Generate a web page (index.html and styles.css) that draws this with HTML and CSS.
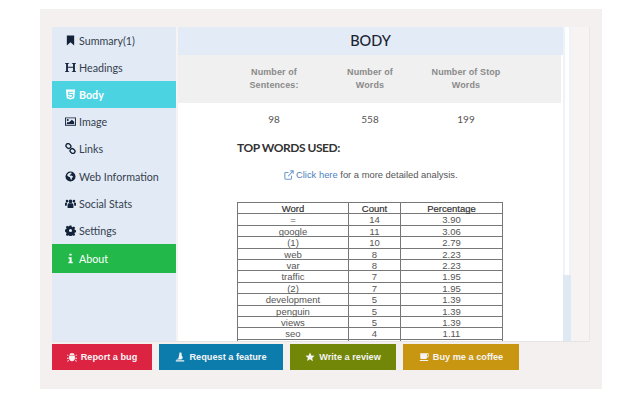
FILE: index.html

```html
<!DOCTYPE html>
<html lang="en">
<head>
  <meta charset="UTF-8">
  <title>SEO Analysis</title>
  <link rel="stylesheet" href="styles.css">
</head>
<body>

<div class="panel">
  <div class="card">
    <ul class="sidebar">
      <li><svg class="icon" viewBox="0 0 12 12"><path d="M2 .5h8v11L6 8l-4 3.500z"/></svg>Summary(1)</li>
      <li><svg class="icon" viewBox="0 0 12 12"><path d="M0 1h4.500v.8H3.200v3.500h5.600V1.800H7.500V1H12v.8h-1.200v8.400H12v.8H7.500v-.8h1.300V6.300H3.200v3.900h1.300v.8H0v-.8h1.200V1.800H0z"/></svg>Headings</li>
      <li class="active"><svg class="icon" viewBox="0 0 12 12"><path fill-rule="evenodd" d="M1 .5h10l-.9 9.700L6 11.500l-4.100-1.300zM3.300 3l.3 3.500h3.900l-.1 1.700L6 8.700l-1.400-.5-.1-.8h-1l.2 1.600L6 9.800l2.400-.8.400-3.500H4.600l-.1-1.400h4.400l.1-1.100z"/></svg>Body</li>
      <li><svg class="icon" viewBox="0 0 12 12"><path fill-rule="evenodd" d="M0 1.500h12v9H0zM1 2.500v7h10v-7zM3 3.300a1.100 1.100 0 1 1 0 2.200 1.100 1.100 0 0 1 0-2.200zM2 8.800V7.300l1.200-1 1 .8L7.500 4 10 6.300v2.500z"/></svg>Image</li>
      <li><svg class="icon" viewBox="0 0 12 12"><g fill="none" stroke="currentColor" stroke-width="1.500"><rect x="1" y="1" width="5.500" height="4.500" rx="2.200" transform="rotate(40 3.700 3.200)"/><rect x="5.500" y="6.500" width="5.500" height="4.500" rx="2.200" transform="rotate(40 8.200 8.700)"/></g></svg>Links</li>
      <li><svg class="icon" viewBox="0 0 12 12"><path fill-rule="evenodd" d="M6 .5a5.500 5.500 0 1 1 0 11 5.500 5.500 0 0 1 0-11zM4 2.500l-1.800 1.800L3.500 6l2 .7.500 2 1.200 1 .3-2 1.500-1.500-2-1.300-1.500.3-.3-1.200 1.500-.5.500-1.500-1-.5z"/></svg>Web Information</li>
      <li><svg class="icon" viewBox="0 0 12 12"><circle cx="6" cy="3.700" r="2"/><circle cx="2.200" cy="3.200" r="1.400"/><circle cx="9.800" cy="3.200" r="1.400"/><path d="M2.800 11V8c0-1.500 1-2.200 2-2.200h2.400c1 0 2 .7 2 2.200v3zM0 8.500V6.300C0 5.300.8 5 1.500 5h1.300c-.5.700-.9 1.600-.9 3.500zM12 8.500V6.300c0-1-.8-1.300-1.500-1.300H9.200c.5.700.9 1.600.9 3.500z"/></svg>Social Stats</li>
      <li><svg class="icon" viewBox="0 0 12 12"><path fill-rule="evenodd" d="M5 .5h2l.3 1.500 1.100.5 1.300-.8 1.400 1.400-.8 1.300.5 1.100 1.200.3v2l-1.200.3-.5 1.100.8 1.300-1.400 1.400-1.300-.8-1.100.5-.3 1.400H5l-.3-1.400-1.100-.5-1.300.8-1.400-1.400.8-1.300-.5-1.100L0 7V5l1.200-.3.500-1.100-.8-1.300L2.300.9l1.300.8 1.100-.5zM6 4.300a1.700 1.700 0 1 0 0 3.400 1.700 1.700 0 0 0 0-3.400z"/></svg>Settings</li>
      <li class="about"><svg class="icon" viewBox="0 0 12 12"><path d="M4.800 .8h2.400v2H4.800zM3.800 4.500h3.400V9.500h1.200v1.700H3.800V9.500H5V6.200H3.800z"/></svg>About</li>
    </ul>

    <div class="main">
      <h2 class="main-title">BODY</h2>
      <div class="stats stats-head">
        <div>Number of<br>Sentences:</div>
        <div>Number of<br>Words</div>
        <div>Number of Stop<br>Words</div>
      </div>
      <div class="stats stats-values">
        <div>98</div>
        <div>558</div>
        <div>199</div>
      </div>
      <h3 class="top-title">TOP WORDS USED:</h3>
      <p class="analysis"><svg class="link-icon" viewBox="0 0 12 12"><path fill="none" stroke="currentColor" stroke-width="1.300" d="M9 7v3a1 1 0 0 1-1 1H2a1 1 0 0 1-1-1V4a1 1 0 0 1 1-1h3.500M5 7.500 10.500 1.500M7.500 1h3.500v3.500"/></svg><a href="#">Click here</a> for a more detailed analysis.</p>
      <table class="words">
        <tr><th class="col-word">Word</th><th class="col-count">Count</th><th>Percentage</th></tr>
        <tr><td>=</td><td>14</td><td>3.90</td></tr>
        <tr><td>google</td><td>11</td><td>3.06</td></tr>
        <tr><td>(1)</td><td>10</td><td>2.79</td></tr>
        <tr><td>web</td><td>8</td><td>2.23</td></tr>
        <tr><td>var</td><td>8</td><td>2.23</td></tr>
        <tr><td>traffic</td><td>7</td><td>1.95</td></tr>
        <tr><td>(2)</td><td>7</td><td>1.95</td></tr>
        <tr><td>development</td><td>5</td><td>1.39</td></tr>
        <tr><td>penguin</td><td>5</td><td>1.39</td></tr>
        <tr><td>views</td><td>5</td><td>1.39</td></tr>
        <tr><td>seo</td><td>4</td><td>1.11</td></tr>
        <tr><td>&nbsp;</td><td>&nbsp;</td><td>&nbsp;</td></tr>
      </table>
    </div>

    <div class="scrollbar"><div class="thumb"></div></div>
  </div>

  <div class="actions">
    <a class="btn btn-bug" href="#"><svg class="icon" viewBox="0 0 12 12"><path d="M4 1.500h4L9 3.500H3zM2.800 4.300h6.400c.3 1 .4 1.500.4 3 0 2.500-1.500 3.700-3.600 3.700S2.400 9.800 2.400 7.300c0-1.500.1-2 .4-3zM0 3l2 1.200-.4.600L0 3.800zM12 3l-2 1.200.4.600 1.600-1zM0 7h2v1H0zM10 7h2v1h-2zM0 11l2-1.800.5.600L.7 11.600zM12 11l-2-1.800-.5.600 1.800 1.800z"/></svg>Report a bug</a>
    <a class="btn btn-feature" href="#"><svg class="icon" viewBox="0 0 12 12"><path d="M5.500.5h2l.5 1.500v2.500C9 5.300 9.500 6.300 9 7.800L7.700 9H1.500v-.2C3.500 8.500 4.500 7.500 4.500 6zM1 10h10v1.300H1z"/></svg>Request a feature</a>
    <a class="btn btn-review" href="#"><svg class="icon" viewBox="0 0 12 12"><path d="M6 .5l1.700 3.600 3.800.5-2.800 2.700.7 3.900L6 8.800l-3.400 1.900.7-3.900L.5 4.600l3.800-.5z"/></svg>Write a review</a>
    <a class="btn btn-coffee" href="#"><svg class="icon" viewBox="0 0 12 12"><path fill-rule="evenodd" d="M1.500 1.500h10v3.500a1.500 1.500 0 0 1-1.500 1.500H9.500V7a1.500 1.500 0 0 1-1.500 1.500H3A1.500 1.500 0 0 1 1.500 7zM9.500 2.700v2.700h.6a.5.500 0 0 0 .5-.5V2.700zM.5 9.500h11l-.8 1.200H1.300z"/></svg>Buy me a coffee</a>
  </div>
</div>

</body>
</html>
```

FILE: styles.css

```css
body {
  margin: 0;
  background: #fff;
  font-family: 'Lato', sans-serif;
  color: #333;
}

.panel {
  width: 538px;
  height: 344px;
  margin: 9px 0 0 40px;
  padding: 18px 12px;
  background: #f5f0f0;
}

.card {
  display: flex;
  height: 314px;
  overflow: hidden;
  border-right: 1px solid #ebe7e7;
  border-bottom: 1px solid #e4e4e4;
  background: #f7f3f3;
}

.sidebar {
  flex: none;
  width: 124px;
  height: 100%;
  margin: 0;
  padding: 0;
  list-style: none;
  background: #e2ebf5;
  font-size: 10.700px;
}

.sidebar li {
  display: flex;
  align-items: center;
  height: 27.100px;
  padding-left: 13px;
  color: #35404e;
}

.sidebar .icon {
  width: 11px;
  height: 11px;
  margin-right: 3px;
  color: #14233a;
}

.icon {
  flex: none;
  fill: currentColor;
}

.sidebar .active {
  background: #4bd3e2;
  color: #fff;
  font-weight: 700;
}

.sidebar .active .icon {
  color: #fff;
}

.sidebar .about {
  height: 29px;
  background: #22b84a;
  color: #fff;
}

.sidebar .about .icon {
  color: #fff;
}

.main {
  flex: none;
  width: 385px;
  margin-left: 2px;
  background: #fff;
}

.main-title {
  height: 28px;
  margin: 0;
  background: #e3ecf6;
  font-size: 14.500px;
  font-weight: 500;
  line-height: 27px;
  text-align: center;
  color: #1c2433;
}

.stats {
  display: grid;
  grid-template-columns: repeat(3, 96px);
  padding: 0 49px 0 48px;
  text-align: center;
  font-family: 'Liberation Sans', sans-serif;
}

.stats-head {
  width: 383px;
  box-sizing: border-box;
  height: 48px;
  padding-top: 11px;
  background: #f0f0f0;
  font-size: 9px;
  font-weight: 700;
  line-height: 13px;
  letter-spacing: .1px;
  color: #8a8a8a;
}

.stats-values {
  margin-top: 10px;
  font-family: 'Lato', sans-serif;
  font-size: 10px;
  line-height: 13px;
  color: #555;
}

.top-title {
  margin: 14px 0 0 59px;
  font-size: 12px;
  font-weight: 700;
  line-height: 16px;
  letter-spacing: -.45px;
  color: #333;
}

.analysis {
  display: flex;
  align-items: center;
  margin: 13px 0 0 106px;
  font-family: 'Liberation Sans', sans-serif;
  font-size: 9.400px;
  line-height: 12px;
  color: #555;
  white-space: pre;
}

.analysis a {
  color: #4d7fc0;
  text-decoration: none;
}

.link-icon {
  width: 10px;
  height: 10px;
  margin-right: 2px;
  color: #6f9bd0;
}

.words {
  width: 266px;
  margin: 21px 0 0 59px;
  border-collapse: collapse;
  font-family: 'Liberation Sans', sans-serif;
  font-size: 9.500px;
  line-height: 9.400px;
  text-align: center;
  color: #555;
}

.words th,
.words td {
  height: 9.400px;
  padding: 1px 0 0;
  border: 1px solid #777;
}

.words th {
  color: #333;
  font-weight: 400;
  -webkit-text-stroke: .2px #333;
}

.col-word {
  width: 110px;
}

.col-count {
  width: 51px;
}

.scrollbar {
  flex: none;
  width: 8px;
  background: #dfe9f4;
}

.thumb {
  height: 248px;
  border: solid #eef3f9;
  border-width: 0 2px;
  background: #fff;
}

.actions {
  display: flex;
  gap: 7px;
  margin-top: 2px;
}

.btn {
  display: flex;
  align-items: center;
  justify-content: center;
  height: 26px;
  font-family: 'Liberation Sans', sans-serif;
  font-size: 9.200px;
  font-weight: 700;
  color: #f4f4f4;
  text-decoration: none;
}

.btn .icon {
  width: 10px;
  height: 10px;
  margin-right: 4px;
}

.btn-bug {
  width: 100px;
  background: #dc2342;
}

.btn-feature {
  width: 124px;
  background: #0c7cad;
}

.btn-review {
  width: 106px;
  background: #728607;
}

.btn-coffee {
  width: 116px;
  background: #c99612;
}
```
